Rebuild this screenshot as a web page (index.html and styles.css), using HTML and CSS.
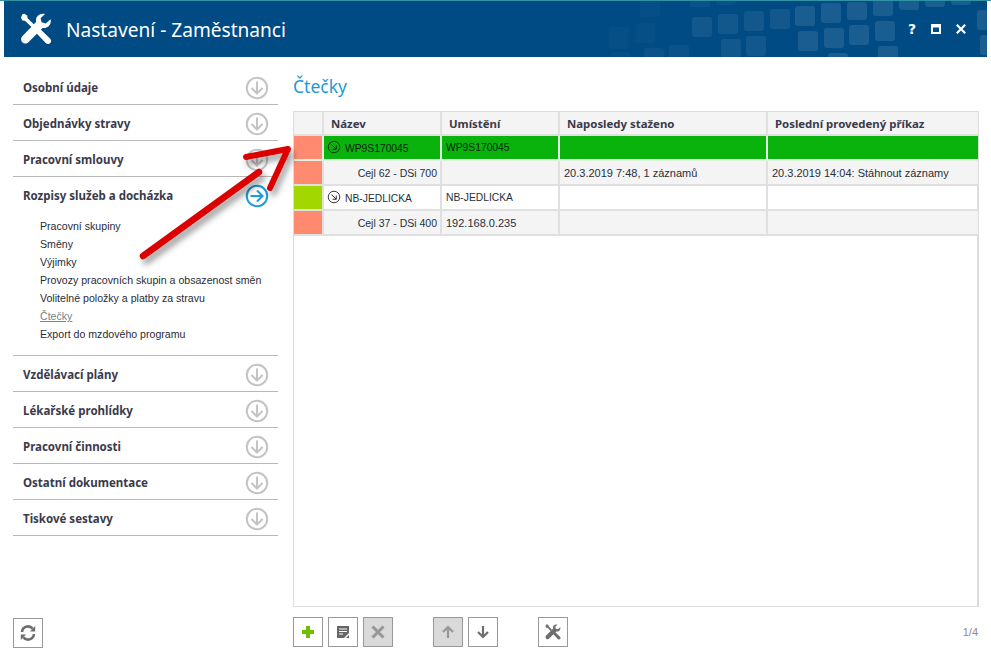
FILE: index.html
```html
<!DOCTYPE html>
<html lang="cs">
<head>
<meta charset="utf-8">
<title>Nastavení - Zaměstnanci</title>
<link rel="stylesheet" href="styles.css">
</head>
<body>
<svg width="0" height="0" class="defs">
  <defs>
    <symbol id="down" viewBox="0 0 24 24">
      <circle cx="12" cy="12" r="10.2" fill="none" stroke="#c4c4c4" stroke-width="2"/>
      <path d="M12 5.5V17.5M6.5 12L12 17.5L17.5 12" fill="none" stroke="#c4c4c4" stroke-width="2"/>
    </symbol>
    <symbol id="wrench" viewBox="0 0 32 32">
      <path d="M21.5 1C17.6 1.6 15.3 5 16.2 8.8L2.3 23.2C.6 25 .7 27.6 2.3 29.3C4 31 6.7 30.9 8.4 29.2L22.6 14.9C26.5 15.8 30 13.2 30.7 9.3C30.9 8.3 30.8 7.2 30.5 6.3L25.8 10.4L21.6 9.3L20.6 5.3L25 .9C23.9 .7 22.7 .8 21.5 1Z" fill="currentColor"/>
      <path d="M2.4 1.2L.9 4.5L2.4 7.5L5 7.7L11.5 14L14 11.5L7.6 5.2L7.2 2.6L4.3 .8ZM17.5 18.6L20.2 16L30 25.4C31.5 27 31.5 28.7 30.3 30C29 31.3 27 31.3 25.7 30L16.9 20.7Z" fill="currentColor"/>
    </symbol>
    <symbol id="go" viewBox="0 0 16 16">
      <circle cx="8" cy="8" r="6.6" fill="none" stroke="#222" stroke-width="1"/>
      <path d="M5.2 5.2L10.4 10.4M10.6 6.4V10.6H6.4" fill="none" stroke="#222" stroke-width="1.1"/>
    </symbol>
  </defs>
</svg>

<header class="header">
  <svg class="pattern" width="983" height="56" viewBox="0 0 983 56" aria-hidden="true">
    <g fill="#fff">
      <g opacity=".02">
        <rect x="605" y="26" width="20" height="22" rx="3"/><rect x="631" y="22" width="20" height="20" rx="3"/>
        <rect x="606" y="51" width="20" height="20" rx="3"/><rect x="636" y="-2" width="20" height="18" rx="3"/>
      </g>
      <g opacity=".04">
        <rect x="640" y="47" width="20" height="20" rx="3"/><rect x="665" y="44" width="20" height="20" rx="3"/>
        <rect x="686" y="-10" width="20" height="16" rx="3"/><rect x="712" y="-12" width="20" height="16" rx="3"/>
      </g>
      <g opacity=".07">
        <rect x="688" y="16" width="20" height="20" rx="3"/><rect x="714" y="13" width="20" height="20" rx="3"/><rect x="740" y="10" width="20" height="20" rx="3"/>
        <rect x="766" y="8" width="20" height="20" rx="3"/><rect x="717" y="38" width="20" height="20" rx="3"/><rect x="742" y="35" width="20" height="20" rx="3"/>
      </g>
      <g opacity=".1">
        <rect x="791" y="5" width="20" height="20" rx="3"/><rect x="817" y="2" width="20" height="20" rx="3"/><rect x="843" y="1" width="20" height="18" rx="3"/>
        <rect x="869" y="-3" width="20" height="18" rx="3"/><rect x="895" y="-6" width="20" height="15" rx="3"/><rect x="921" y="-9" width="20" height="15" rx="3"/><rect x="947" y="-12" width="20" height="16" rx="3"/>
        <rect x="794" y="30" width="20" height="20" rx="3"/><rect x="820" y="27" width="20" height="20" rx="3"/><rect x="845" y="24" width="20" height="20" rx="3"/><rect x="871" y="20" width="20" height="20" rx="3"/>
        <rect x="824" y="52" width="20" height="20" rx="3"/><rect x="874" y="45" width="20" height="20" rx="3"/>
        <rect x="973" y="9" width="20" height="20" rx="3"/><rect x="976" y="34" width="20" height="20" rx="3"/>
      </g>
    </g>
  </svg>
  <svg class="header-icon" width="32" height="32"><use href="#wrench"/></svg>
  <h1 class="header-title">Nastavení - Zaměstnanci</h1>
  <div class="win-controls">
    <span class="help">?</span>
    <svg width="10" height="10" viewBox="0 0 10 10"><path d="M0 0H10V10H0ZM2 3.5V8H8V3.5Z" fill="#fff" fill-rule="evenodd"/></svg>
    <svg width="10" height="10" viewBox="0 0 10 10"><path d="M.8 .8L9.2 9.2M9.2 .8L.8 9.2" stroke="#fff" stroke-width="2.2"/></svg>
  </div>
</header>

<div class="body-row">
  <nav class="sidebar">
    <ul class="menu">
      <li class="menu-item"><div class="menu-head"><span>Osobní údaje</span><svg class="menu-icon"><use href="#down"/></svg></div></li>
      <li class="menu-item"><div class="menu-head"><span>Objednávky stravy</span><svg class="menu-icon"><use href="#down"/></svg></div></li>
      <li class="menu-item"><div class="menu-head"><span>Pracovní smlouvy</span><svg class="menu-icon"><use href="#down"/></svg></div></li>
      <li class="menu-item menu-open">
        <div class="menu-head"><span>Rozpisy služeb a docházka</span>
          <svg class="menu-icon" viewBox="0 0 24 24"><circle cx="12" cy="12" r="10.2" fill="none" stroke="#1e9ad6" stroke-width="2"/><path d="M5.5 12H17.5M12 6.5L17.5 12L12 17.5" fill="none" stroke="#1e9ad6" stroke-width="2"/></svg>
        </div>
        <ul class="submenu">
          <li>Pracovní skupiny</li>
          <li>Směny</li>
          <li>Výjimky</li>
          <li>Provozy pracovních skupin a obsazenost směn</li>
          <li>Volitelné položky a platby za stravu</li>
          <li class="sub-active">Čtečky</li>
          <li>Export do mzdového programu</li>
        </ul>
      </li>
      <li class="menu-item"><div class="menu-head"><span>Vzdělávací plány</span><svg class="menu-icon"><use href="#down"/></svg></div></li>
      <li class="menu-item"><div class="menu-head"><span>Lékařské prohlídky</span><svg class="menu-icon"><use href="#down"/></svg></div></li>
      <li class="menu-item"><div class="menu-head"><span>Pracovní činnosti</span><svg class="menu-icon"><use href="#down"/></svg></div></li>
      <li class="menu-item"><div class="menu-head"><span>Ostatní dokumentace</span><svg class="menu-icon"><use href="#down"/></svg></div></li>
      <li class="menu-item"><div class="menu-head"><span>Tiskové sestavy</span><svg class="menu-icon"><use href="#down"/></svg></div></li>
    </ul>
    <button class="tool refresh" type="button" aria-label="Obnovit">
      <svg width="18" height="18" viewBox="0 0 18 18"><path d="M3 8A6 6 0 0 1 13.6 4.6M15 10A6 6 0 0 1 4.4 13.4" fill="none" stroke="#6e6e6e" stroke-width="2.6"/><path d="M11 7.5L16.2 7.5L16.2 2ZM7 10.5L1.8 10.5L1.8 16Z" fill="#6e6e6e"/></svg>
    </button>
  </nav>

  <main class="content">
    <h2 class="page-title">Čtečky</h2>
    <div class="grid-wrap">
      <table class="grid">
        <colgroup><col class="c0"><col class="c1"><col class="c2"><col class="c3"><col class="c4"></colgroup>
        <thead>
          <tr><th></th><th>Název</th><th>Umístění</th><th>Naposledy staženo</th><th>Poslední provedený příkaz</th></tr>
        </thead>
        <tbody>
          <tr class="row-green"><td class="st-red"></td><td class="cell-name"><svg class="go" width="14" height="14"><use href="#go"/></svg>WP9S170045</td><td class="code">WP9S170045</td><td></td><td></td></tr>
          <tr class="row-alt"><td class="st-red"></td><td class="cell-sub">Cejl 62 - DSi 700</td><td></td><td>20.3.2019 7:48, 1 záznamů</td><td>20.3.2019 14:04: Stáhnout záznamy</td></tr>
          <tr><td class="st-lime"></td><td class="cell-name"><svg class="go" width="14" height="14"><use href="#go"/></svg>NB-JEDLICKA</td><td class="code">NB-JEDLICKA</td><td></td><td></td></tr>
          <tr class="row-alt"><td class="st-red"></td><td class="cell-sub">Cejl 37 - DSi 400</td><td>192.168.0.235</td><td></td><td></td></tr>
        </tbody>
      </table>
    </div>
    <div class="toolbar">
      <button class="tool" type="button" aria-label="Přidat"><svg width="14" height="14" viewBox="0 0 14 14"><path d="M5 1H9V5H13V9H9V13H5V9H1V5H5Z" fill="#6fbf00"/></svg></button>
      <button class="tool" type="button" aria-label="Upravit"><svg width="14" height="14" viewBox="0 0 14 14"><path d="M1 1H13V8L8 13H1Z" fill="#666"/><path d="M3 4H11M3 6.5H11M3 9H7" stroke="#fff" stroke-width="1"/><path d="M13 10V13H10Z" fill="#666"/></svg></button>
      <button class="tool tool-off" type="button" aria-label="Smazat"><svg width="14" height="14" viewBox="0 0 14 14"><path d="M1.5 1.5L12.5 12.5M12.5 1.5L1.5 12.5" stroke="#969696" stroke-width="3"/></svg></button>
      <button class="tool tool-off gap-left" type="button" aria-label="Nahoru"><svg width="14" height="14" viewBox="0 0 14 14"><path d="M7 13V2M2 7L7 2L12 7" fill="none" stroke="#969696" stroke-width="2.2"/></svg></button>
      <button class="tool" type="button" aria-label="Dolů"><svg width="14" height="14" viewBox="0 0 14 14"><path d="M7 1V12M2 7L7 12L12 7" fill="none" stroke="#6e6e6e" stroke-width="2.2"/></svg></button>
      <button class="tool gap-left" type="button" aria-label="Nastavení"><svg class="tool-wrench" width="16" height="16"><use href="#wrench"/></svg></button>
      <span class="pager">1/4</span>
    </div>
  </main>
</div>

<svg class="annotation" width="991" height="658" viewBox="0 0 991 658" aria-hidden="true">
  <defs><filter id="sh" x="-20%" y="-20%" width="140%" height="140%"><feDropShadow dx="3" dy="5" stdDeviation="3" flood-color="#000" flood-opacity=".4"/></filter></defs>
  <g filter="url(#sh)" fill="none" stroke="#dc0000" stroke-linecap="round" stroke-linejoin="round">
    <path d="M143 256L259 172" stroke-width="6.5"/>
    <path d="M246 157L288 149L270 188" stroke-width="6"/>
  </g>
</svg>
</body>
</html>
```

FILE: styles.css
```css
* { box-sizing: border-box; }
html, body { margin: 0; padding: 0; }
body {
  width: 991px;
  height: 658px;
  overflow: hidden;
  background: #fff;
  color: #222;
  font-family: "Liberation Sans", sans-serif;
  font-size: 11px;
  border-top: 1px solid #2f93a5;
}
.defs { position: absolute; }

.header {
  position: relative;
  display: flex;
  align-items: center;
  height: 56px;
  margin: 0 4px;
  padding-left: 16px;
  background: #004b84;
  color: #fff;
  overflow: hidden;
}
.pattern { position: absolute; left: 0; top: 0; }
.header-icon { position: relative; flex: none; color: #fff; }
.header-title {
  position: relative;
  margin: 2px 0 0 14px;
  font-family: "Noto Sans", sans-serif;
  font-size: 19.1px;
  font-weight: 400;
  white-space: nowrap;
}
.win-controls {
  position: relative;
  margin-left: auto;
  margin-right: 21px;
  display: flex;
  align-items: center;
  gap: 15px;
}
.help { font: bold 14px "DejaVu Sans", sans-serif; width: 8px; text-align: center; }

.body-row { display: flex; height: 600px; }

.sidebar {
  position: relative;
  flex: none;
  width: 293px;
  padding: 12px 15px 0 13px;
}
.menu, .submenu { list-style: none; margin: 0; padding: 0; }
.menu-item { border-bottom: 1px solid #b8b8b8; }
.menu-head {
  display: flex;
  align-items: center;
  justify-content: space-between;
  height: 35px;
  padding: 2px 9px 0 10px;
  font-family: "Noto Sans", sans-serif;
  font-size: 11.5px;
  font-weight: 700;
  color: #3a3a4a;
}
.menu-icon { width: 24px; height: 24px; flex: none; }
.submenu { padding: 5px 0 12px 27px; font-size: 10.6px; }
.submenu li { height: 18px; line-height: 18px; color: #2b2b35; white-space: nowrap; }
.submenu .sub-active { color: #7d8088; text-decoration: underline; }

.tool {
  display: flex;
  align-items: center;
  justify-content: center;
  width: 30px;
  height: 30px;
  padding: 0;
  background: #fff;
  border: 1px solid #999;
  border-radius: 0;
}
.tool-off { background: #d9d9d9; }
.gap-left { margin-left: 35px; }
.tool-wrench { color: #6e6e6e; }
.refresh { position: absolute; left: 13px; top: 561px; }

.content { flex: 1; min-width: 0; padding-right: 12px; }
.page-title {
  margin: 0;
  height: 54px;
  padding-top: 15px;
  font-family: "Noto Sans", sans-serif;
  font-size: 17.5px;
  line-height: 28px;
  font-weight: 400;
  color: #1e9ad6;
}
.grid-wrap {
  height: 496px;
  border: 1px solid #dcdcdc;
  border-right-width: 2px;
}
.grid {
  width: 684px;
  table-layout: fixed;
  border-collapse: separate;
  border-spacing: 0;
}
.c0 { width: 30px; } .c1 { width: 118px; } .c2 { width: 118px; } .c3 { width: 208px; } .c4 { width: 210px; }
.grid th, .grid td {
  height: 25px;
  padding: 1px 0 0 4px;
  border-right: 2px solid #e0e0e0;
  border-bottom: 2px solid #e0e0e0;
  white-space: nowrap;
  overflow: hidden;
  font-weight: 400;
  color: #26303c;
}
.grid th {
  height: 24px;
  padding: 0 0 0 7px;
  font-family: "Noto Sans", sans-serif;
  font-size: 11.4px;
  font-weight: 700;
  text-align: left;
  background: #f4f4f4;
  color: #3a3a4a;
}
.grid th:first-child, .grid td:first-child { padding: 0; }
.grid tr > :last-child { border-right: 0; }
.row-alt td { background: #f4f4f4; }
.row-green td { background: #09b30b; color: #0d2410; border-color: #e4efe4; }
.grid .st-red { background: #ff8a70; }
.grid .st-lime { background: #a2d700; }
.grid .code { font-size: 10.3px; padding-top: 0; }
.grid .cell-name { padding: 2px 0 0 3px; font-size: 10.3px; line-height: 14px; }
.go { vertical-align: top; margin: -2px 4px 0 0; }
.grid .cell-sub { padding-left: 0; text-align: right; padding-right: 3px; font-size: 10.5px; }

.toolbar { display: flex; align-items: center; gap: 5px; margin-top: 10px; }
.pager { margin-left: auto; margin-right: 1px; color: #8a8a8a; }

.annotation { position: absolute; left: 0; top: 0; pointer-events: none; }
```
